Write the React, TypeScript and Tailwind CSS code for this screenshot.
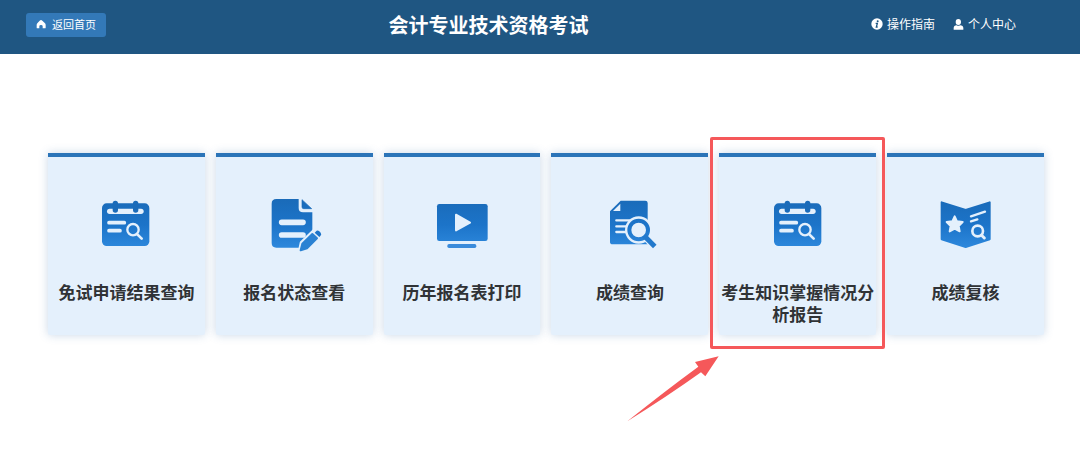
import React from 'react';

interface MenuItem {
    title: string;
    icon: React.ReactNode;
    marked?: boolean;
}

const PAPER = '#e4f0fc';

function IconFrame({ children }: { children: React.ReactNode }) {
    return (
        <svg className="h-[60px] w-[60px]" viewBox="0 0 180 180" fill="none" aria-hidden="true">
            <defs>
                <linearGradient id="iconBlue" gradientUnits="userSpaceOnUse" x1="90" y1="15" x2="90" y2="165">
                    <stop offset="0" stopColor="#1a6bb9" />
                    <stop offset="0.5" stopColor="#1c74c9" />
                    <stop offset="1" stopColor="#2f8ade" />
                </linearGradient>
            </defs>
            {children}
        </svg>
    );
}

function CalendarIcon() {
    return (
        <IconFrame>
            <rect x="18" y="25" width="142" height="128" rx="14" fill="url(#iconBlue)" />
            <rect x="33" y="41" width="110" height="16" rx="8" fill={PAPER} />
            <path d="M58 25V45M119 25V45" stroke="#1a6bb9" strokeWidth="16" strokeLinecap="round" />
            <g stroke={PAPER} strokeLinecap="round">
                <path d="M39 83H85M39 107H72" strokeWidth="11" />
                <circle cx="111" cy="104" r="17" strokeWidth="7" />
                <path d="M124 118L137 131" strokeWidth="8" />
            </g>
        </IconFrame>
    );
}

function FormEditIcon() {
    return (
        <IconFrame>
            <path
                d="M37 12H104V39Q104 52 117 52H145V144Q145 158 131 158H37Q23 158 23 144V26Q23 12 37 12Z"
                fill="url(#iconBlue)"
            />
            <path d="M114 14V36Q114 41 119 41H143Z" fill="url(#iconBlue)" stroke="#1a6bb9" strokeWidth="2" strokeLinejoin="round" />
            <path d="M53 82H117M53 120H117" stroke={PAPER} strokeWidth="17" strokeLinecap="round" />
            <path d="M109 167L114 144L155 105L173 122L132 162Z" fill={PAPER} stroke={PAPER} strokeWidth="14" strokeLinejoin="round" />
            <path d="M110 166L115 146L145 117L159 130L129 160Z" fill="#2b82d3" stroke="#2b82d3" strokeWidth="6" strokeLinejoin="round" />
            <path d="M155 110Q160 104 166 109L170 113Q174 118 169 123L166 126L152 113Z" fill="#1c74c9" />
        </IconFrame>
    );
}

function ScreenIcon() {
    return (
        <IconFrame>
            <rect x="15" y="27" width="152" height="111" rx="7" fill="url(#iconBlue)" />
            <path d="M72 59L114 83L72 106Z" fill={PAPER} stroke={PAPER} strokeWidth="6" strokeLinejoin="round" />
            <rect x="46" y="147" width="87" height="12" rx="5" fill="#3a8bdb" />
        </IconFrame>
    );
}

function ScoreSearchIcon() {
    return (
        <IconFrame>
            <path d="M62 17H136Q143 17 143 24V148H38Q30 148 30 140V49Z" fill="url(#iconBlue)" />
            <path d="M39 48L61 26V48Z" fill={PAPER} />
            <path d="M49 76H90M49 94H84M49 111H84" stroke={PAPER} strokeWidth="7" strokeLinecap="round" />
            <circle cx="116" cy="105" r="41" fill={PAPER} />
            <path d="M136 126L162 152" stroke={PAPER} strokeWidth="22" />
            <circle cx="116" cy="105" r="28" stroke="url(#iconBlue)" strokeWidth="12" />
            <path d="M137 127L159 149" stroke="#2279cc" strokeWidth="15" strokeLinecap="square" />
        </IconFrame>
    );
}

function ReviewIcon() {
    return (
        <IconFrame>
            <path
                d="M17 22L89 45L161 22V133L89 156L17 133Z"
                fill="url(#iconBlue)"
                stroke="url(#iconBlue)"
                strokeWidth="6"
                strokeLinejoin="round"
            />
            <path
                d="M56 64L63 79L80 81L68 93L71 109L56 101L41 109L44 93L32 81L49 79Z"
                fill={PAPER}
                stroke={PAPER}
                strokeWidth="6"
                strokeLinejoin="round"
            />
            <g stroke={PAPER} strokeLinecap="round">
                <path d="M105 64L147 50M105 79L124 73" strokeWidth="7" />
                <circle cx="125" cy="108" r="16" strokeWidth="8" />
                <path d="M136 120L145 129" strokeWidth="9" />
            </g>
        </IconFrame>
    );
}

const menuItems: MenuItem[] = [
    { title: '免试申请结果查询', icon: <CalendarIcon /> },
    { title: '报名状态查看', icon: <FormEditIcon /> },
    { title: '历年报名表打印', icon: <ScreenIcon /> },
    { title: '成绩查询', icon: <ScoreSearchIcon /> },
    { title: '考生知识掌握情况分析报告', icon: <CalendarIcon />, marked: true },
    { title: '成绩复核', icon: <ReviewIcon /> },
];

function Header() {
    return (
        <header className="flex items-center justify-between bg-[#1f5682] pt-3 pr-16 pb-4 pl-[26px] text-white">
            <button type="button" className="flex h-6 items-center gap-1.5 rounded-[3px] bg-[#3379b8] px-[10px] pb-[2px] text-[11px]">
                <svg className="h-[10px] w-[10px]" viewBox="0 0 30 30" fill="currentColor" aria-hidden="true">
                    <path d="M15 3Q17 3 19 5L27 13Q29 15 29 18V26Q29 28 27 28H20V22Q20 18 15 18Q10 18 10 22V28H4Q2 28 2 26V18Q2 15 4 13L11 5Q13 3 15 3Z" />
                </svg>
                返回首页
            </button>
            <h1 className="text-xl leading-[26px] font-bold">会计专业技术资格考试</h1>
            <nav className="flex items-center gap-[18px] pb-[2px] text-xs leading-5">
                <a href="#guide" className="flex items-center gap-1">
                    <svg className="h-3 w-3" viewBox="0 0 36 36" aria-hidden="true">
                        <circle cx="18" cy="18" r="17" fill="#ffffff" />
                        <circle cx="20" cy="10" r="3" fill="#1f5682" />
                        <path d="M14 16H19L16 27H20" fill="none" stroke="#1f5682" strokeWidth="4" />
                    </svg>
                    操作指南
                </a>
                <a href="#profile" className="flex items-center gap-1">
                    <svg className="h-[11px] w-[11px]" viewBox="0 0 33 33" fill="currentColor" aria-hidden="true">
                        <ellipse cx="16" cy="9" rx="8" ry="9" />
                        <path d="M2 32V27Q2 20 11 19Q16 22 21 19Q31 20 31 27V32Z" />
                    </svg>
                    个人中心
                </a>
            </nav>
        </header>
    );
}

// 红框和箭头浮在卡片之上
function CardMarker() {
    return (
        <>
            <span className="pointer-events-none absolute -inset-x-[9px] -top-5 -bottom-[14px] z-10 rounded-xs border-3 border-[#f5585a]" />
            <svg
                className="pointer-events-none absolute top-[199px] right-full z-10 h-[66px] w-[92px]"
                viewBox="0 0 276 198"
                aria-hidden="true"
            >
                <path d="M275 1L204 18L214 32Q110 108 1 196Q120 122 222 49L235 61Z" fill="#f5585a" />
            </svg>
        </>
    );
}

function MenuCard({ item }: { item: MenuItem }) {
    return (
        <a
            href="#menu"
            className="relative flex min-h-[182px] flex-col items-center gap-[26px] rounded-b-xs border-t-4 border-[#2b74b8] bg-[#e4f0fc] pt-[38px] pb-2 shadow-[0_0_10px_rgba(60,110,170,0.28)]"
        >
            {item.icon}
            <span className="text-center text-[17px] leading-[22px] font-bold text-[#303336]">{item.title}</span>
            {item.marked && <CardMarker />}
        </a>
    );
}

export default function App() {
    return (
        <div className="min-h-screen bg-white font-['Noto_Sans_CJK_SC',sans-serif]">
            <Header />
            <main className="grid grid-cols-6 gap-[11px] pt-[99px] pr-9 pb-[119px] pl-12">
                {menuItems.map((item) => (
                    <MenuCard key={item.title} item={item} />
                ))}
            </main>
        </div>
    );
}
